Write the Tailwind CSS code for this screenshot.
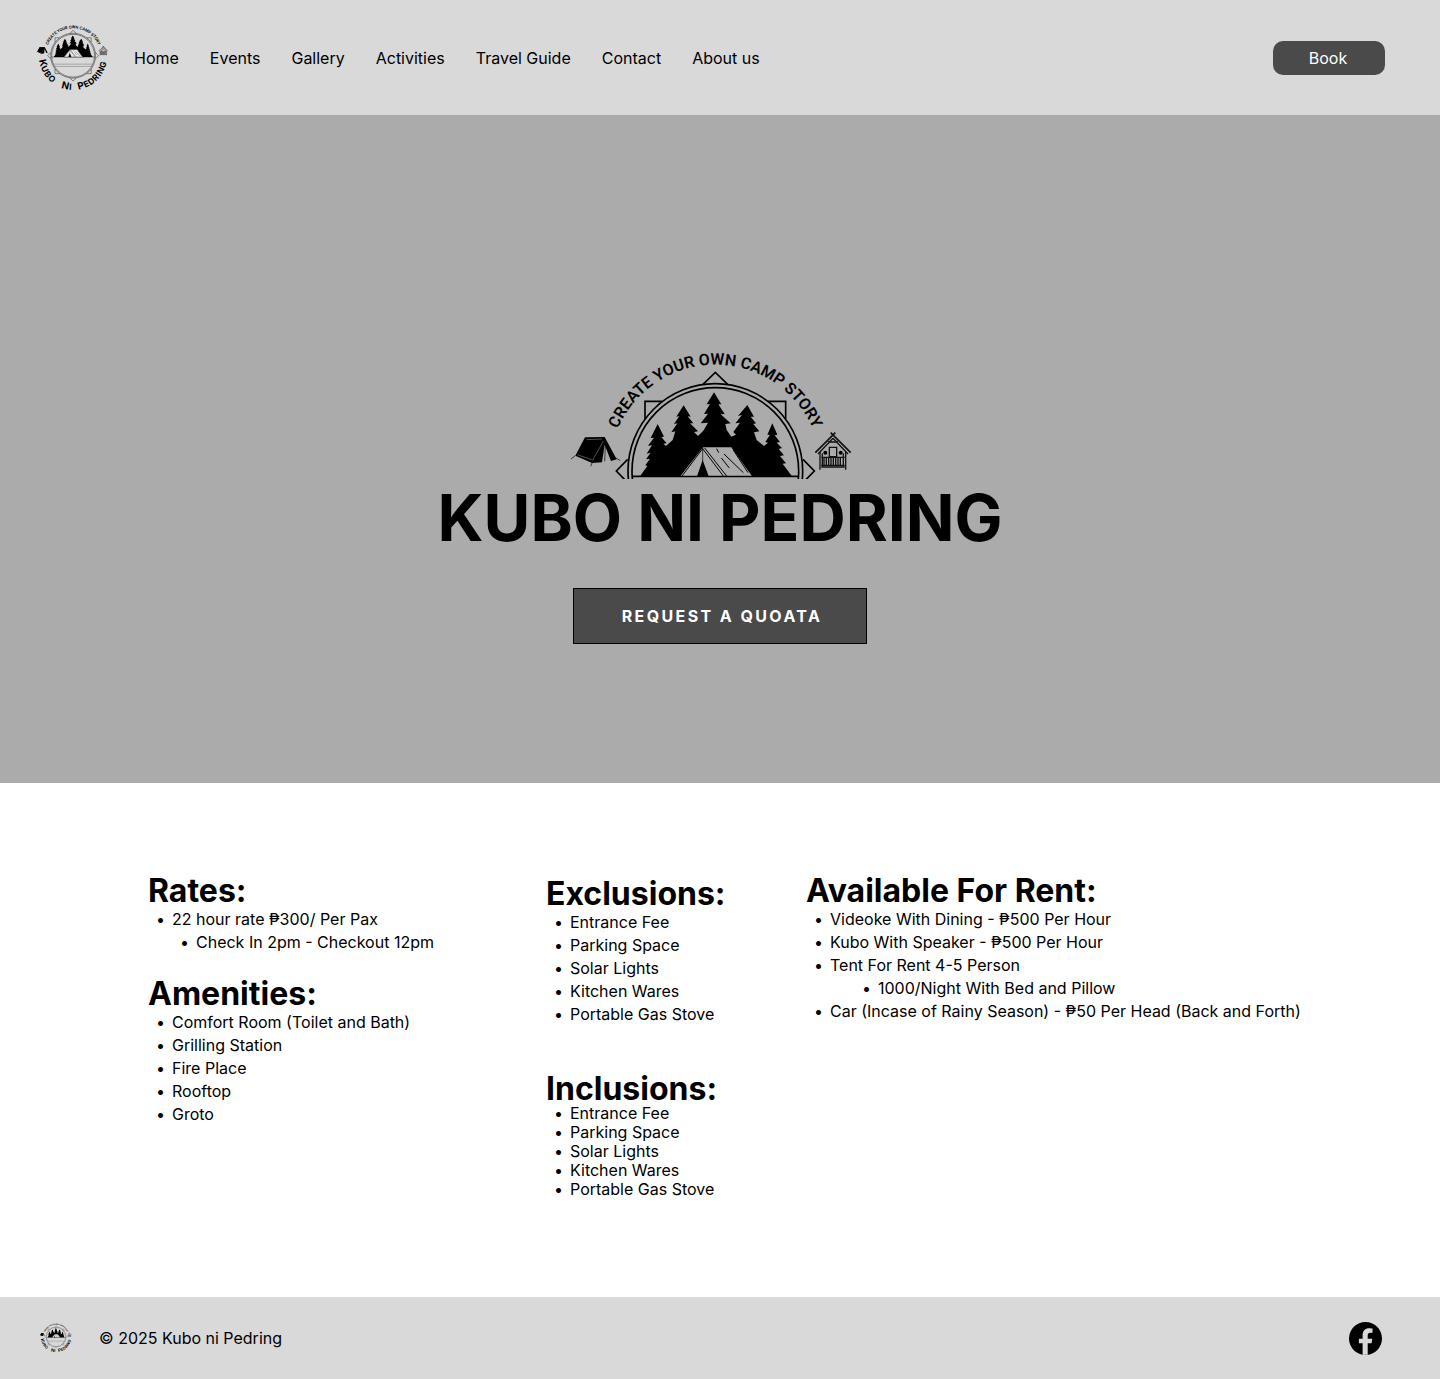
<!DOCTYPE html>
<html lang="en">
<head>
<meta charset="utf-8">
<meta name="viewport" content="width=device-width, initial-scale=1">
<title>Kubo ni Pedring</title>
<script src="https://cdn.jsdelivr.net/npm/@tailwindcss/browser@4"></script>
</head>
<body class="flex min-h-screen flex-col bg-white font-[Inter,sans-serif] text-base text-black">

<!-- Shared camp logo; currentColor paints the light parts (tent canvas) -->
<svg class="absolute size-0" aria-hidden="true">
  <defs>
    <path id="arc-top" d="M147 393A319 319 0 0 1 785 393"/>
    <path id="arc-bottom" d="M66 393A400 400 0 0 0 866 393V293"/>
    <g id="camp-logo">
      <g fill="none" stroke="#000" stroke-width="5">
        <circle cx="466" cy="393" r="262"/>
        <circle cx="466" cy="393" r="250"/>
        <path d="M429 133L466 97L503 133M624 184H677V237M729 358L763 393L729 428M677 549V602H624M503 653L466 689L429 653M308 602H255V549M203 428L169 393L203 358M255 237V184H308"/>
        <path d="M218 409H714"/>
        <path d="M228 492H704M242 518H690" stroke="#777" stroke-width="6"/>
      </g>
      <path d="M240 409L262 378L256 376L270 356L258 358L272 338L260 341L276 316L264 317L282 293L272 294L293 252L312 290L304 291L320 310L310 311L318 318L338 300L346 274L334 277L352 250L342 252L358 228L349 230L371 196L392 230L383 229L400 250L390 250L414 274L402 276L414 288L430 272L444 248L422 250L444 221L432 222L450 192L440 193L462 157L484 193L475 193L494 222L482 223L512 250L496 252L500 270L514 290L528 284L520 276L540 248L526 250L546 225L534 228L562 195L582 230L572 230L588 250L580 252L598 274L582 277L590 300L612 318L624 308L616 306L630 284L622 284L637 250L652 284L644 286L660 306L650 308L666 324L656 327L672 346L660 348L678 370L668 371L696 409Z"/>
      <path d="M428 320H515L579 409H358Z" fill="currentColor" stroke="#000" stroke-width="4"/>
      <path d="M428 326L490 408M434 324L500 408M428 326L366 408M470 326L476 338M484 354L508 384M492 342L550 398M520 330L564 398" fill="none" stroke="#000" stroke-width="3"/>
      <path d="M428 320V364" stroke="#000" stroke-width="2"/>
      <path d="M428 360L411 409H446Z"/>
      <!-- pup tent -->
      <path d="M75 292L134 291L170 358L153 363L134 314L126 367L96 369L46 347Z"/>
      <path d="M46 347L33 357M96 369L92 379M168 354L181 362M136 318L134 364" fill="none" stroke="#000" stroke-width="2"/>
      <path d="M52 344L98 360L130 304M80 299L126 297" fill="none" stroke="#777" stroke-width="2"/>
      <!-- bamboo hut -->
      <g fill="none" stroke="#111" stroke-width="4">
        <path d="M812 278L872 338M826 278L766 338" stroke-width="5"/>
        <path d="M819 295L774 342M819 295L864 342" stroke-width="4"/>
        <path d="M804 306H834M780 336V389M857 336V389M787 340V380M850 340V380" />
        <path d="M808 322H830V350H808ZM784 352H854M784 376H854M784 381H854" stroke-width="4"/>
        <path d="M792 352V376M799 352V376M806 352V376M813 352V376M820 352V376M827 352V376M834 352V376M841 352V376" stroke-width="4"/>
      </g>
      <circle cx="796" cy="338" r="6"/>
      <circle cx="842" cy="338" r="6"/>
      <text font-family="Roboto, sans-serif" font-size="48" font-weight="600" text-anchor="middle"><textPath href="#arc-top" startOffset="50%">CREATE YOUR OWN CAMP STORY</textPath></text>
      <g font-family="Inter, sans-serif" font-size="98" font-weight="700" letter-spacing="7">
        <text><textPath href="#arc-bottom" startOffset="52"><tspan font-size="114">K</tspan>UBO</textPath></text>
        <text><textPath href="#arc-bottom" startOffset="486"><tspan font-size="114">N</tspan>I</textPath></text>
        <text><textPath href="#arc-bottom" startOffset="692"><tspan font-size="114">P</tspan>EDRING</textPath></text>
      </g>
    </g>
  </defs>
</svg>

<header class="flex h-[115px] shrink-0 items-center bg-[#d9d9d9] pr-[55px] pl-[33px]">
  <a href="#" aria-label="Kubo ni Pedring home" class="text-[#e6e6e6]">
    <svg class="h-[72px] w-20" viewBox="0 0 930 840"><use href="#camp-logo"/></svg>
  </a>
  <nav class="ml-[21px] flex gap-[31px]">
    <a href="#">Home</a>
    <a href="#">Events</a>
    <a href="#">Gallery</a>
    <a href="#">Activities</a>
    <a href="#">Travel Guide</a>
    <a href="#">Contact</a>
    <a href="#">About us</a>
  </nav>
  <button type="button" class="ml-auto h-[34px] w-28 rounded-[10px] bg-[#4a4a4a] pr-[2px] text-white">Book</button>
</header>

<main class="flex-1">
  <section class="flex h-[668px] flex-col items-center bg-[#ababab] pt-[225px]">
    <svg class="mr-[10px] h-[139px] w-[310px] text-[#ababab]" viewBox="0 0 930 417" aria-hidden="true"><use href="#camp-logo"/></svg>
    <h1 class="text-[64px] leading-[78px] font-bold">KUBO NI PEDRING</h1>
    <button type="button" class="mt-[31px] h-14 w-[294px] border border-black bg-[#4a4a4a] pl-1 font-bold tracking-[0.15em] text-white">REQUEST A QUOATA</button>
  </section>

  <section class="grid min-h-[514px] grid-cols-[398fr_260fr_602fr] pt-[90px] pr-8 pb-24 pl-[148px] [&_li]:before:-ml-4 [&_li]:before:inline-block [&_li]:before:w-4 [&_li]:before:content-['•']">
    <div>
      <h2 class="text-[32px] leading-[35px] font-bold">Rates:</h2>
      <ul class="pl-6 leading-[23px]">
        <li>22 hour rate ₱300/ Per Pax
          <ul class="pl-6"><li>Check In 2pm - Checkout 12pm</li></ul>
        </li>
      </ul>
      <h2 class="mt-[22px] text-[32px] leading-[35px] font-bold">Amenities:</h2>
      <ul class="pl-6 leading-[23px]">
        <li>Comfort Room (Toilet and Bath)</li>
        <li>Grilling Station</li>
        <li>Fire Place</li>
        <li>Rooftop</li>
        <li>Groto</li>
      </ul>
    </div>
    <div class="pt-[3px]">
      <h2 class="text-[32px] leading-[35px] font-bold">Exclusions:</h2>
      <ul class="pl-6 leading-[23px]">
        <li>Entrance Fee</li>
        <li>Parking Space</li>
        <li>Solar Lights</li>
        <li>Kitchen Wares</li>
        <li>Portable Gas Stove</li>
      </ul>
      <h2 class="mt-[47px] text-[32px] leading-[31px] font-bold">Inclusions:</h2>
      <ul class="pl-6 leading-[19px]">
        <li>Entrance Fee</li>
        <li>Parking Space</li>
        <li>Solar Lights</li>
        <li>Kitchen Wares</li>
        <li>Portable Gas Stove</li>
      </ul>
    </div>
    <div>
      <h2 class="text-[32px] leading-[35px] font-bold">Available For Rent:</h2>
      <ul class="pl-6 leading-[23px]">
        <li>Videoke With Dining - ₱500 Per Hour</li>
        <li>Kubo With Speaker - ₱500 Per Hour</li>
        <li>Tent For Rent 4-5 Person
          <ul class="pl-12"><li>1000/Night With Bed and Pillow</li></ul>
        </li>
        <li>Car (Incase of Rainy Season) - ₱50 Per Head (Back and Forth)</li>
      </ul>
    </div>
  </section>
</main>

<footer class="flex h-[82px] shrink-0 items-center bg-[#d9d9d9] pr-[58px] pl-[38px] text-[#e6e6e6]">
  <svg class="h-8 w-9" viewBox="0 0 930 840" aria-hidden="true"><use href="#camp-logo"/></svg>
  <p class="ml-[25px] text-black">© 2025 Kubo ni Pedring</p>
  <a href="#" aria-label="Facebook" class="ml-auto text-black">
    <svg class="size-[33px]" viewBox="0 0 24 24" fill="currentColor" fill-rule="evenodd"><path d="M12 0a12 12 0 1 0 0 24 12 12 0 0 0 0-24zM9.900 23.800V15.400H7.200V12.100H9.900V9.800C9.900 6.400 11.800 4.600 14.600 4.600c1.200 0 2.500.2 2.500.2V7.900h-1.500c-1.500 0-2 .9-2 1.900v2.300h3.300l-.5 3.300h-2.800v8.400z"/></svg>
  </a>
</footer>
</body>
</html>
